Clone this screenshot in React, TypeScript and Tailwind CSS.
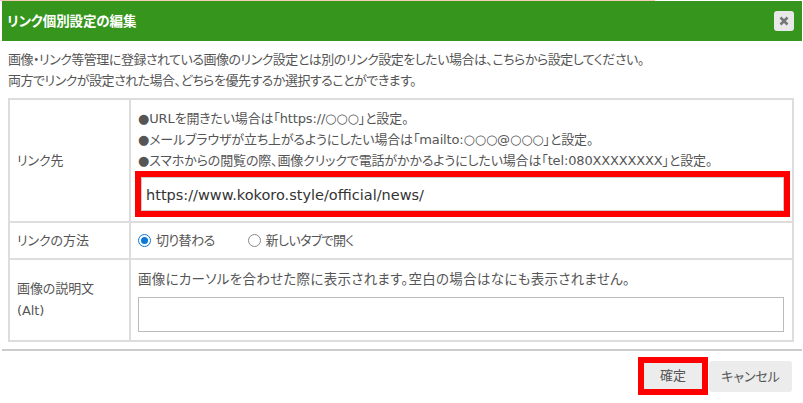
const font = "font-['DejaVu_Sans','Noto_Sans_CJK_JP',sans-serif]";

function Radio({ checked, label }: { checked?: boolean; label: string }) {
  return (
    <label className="flex items-center gap-[5px]">
      <span
        className={
          checked
            ? "flex h-[13px] w-[13px] items-center justify-center rounded-full border border-[#0a78d7] bg-white"
            : "flex h-[13px] w-[13px] items-center justify-center rounded-full border border-[#8a8a8a] bg-white"
        }
      >
        {checked && <span className="h-[7px] w-[7px] rounded-full bg-[#0a78d7]" />}
      </span>
      <span>{label}</span>
    </label>
  );
}

export default function App() {
  return (
    <div className={`${font} flex h-[403px] w-[803px] flex-col overflow-hidden bg-white text-[13px] text-[#555] [font-feature-settings:'palt'] tracking-[-0.1px]`}>
      <div className="h-[1px] w-[655px] shrink-0 bg-[#f6cdb4]" />
      <div className="ml-[2px] flex h-[40px] w-[800px] shrink-0 items-center justify-between bg-[#35951c] pl-[5px] pr-[8px]">
        <h1 className="text-[13.5px] font-bold text-white">リンク個別設定の編集</h1>
        <button className="flex h-[20px] w-[20px] items-center justify-center rounded-[3px] bg-[#e8e8e8] text-[#777]">
          <svg width="10" height="10" viewBox="0 0 10 10">
            <path d="M1.5 1.5 8.5 8.5M8.5 1.5 1.5 8.5" stroke="#777" strokeWidth="2.6" />
          </svg>
        </button>
      </div>

      <div className="px-[8px] pt-[8px] leading-[21px] tracking-[-0.5px]">
        <p>画像・リンク等管理に登録されている画像のリンク設定とは別のリンク設定をしたい場合は、こちらから設定してください。</p>
        <p>両方でリンクが設定された場合、どちらを優先するか選択することができます。</p>
      </div>

      <div className="mx-[8px] mt-[7px] flex w-[786px] flex-col border-2 border-[#ddd]">
        <div className="flex h-[123px] border-b-2 border-[#ddd]">
          <div className="flex w-[121px] shrink-0 items-center border-r-2 border-[#ddd] pl-[7px]">リンク先</div>
          <div className="flex-1 pl-[4px] pt-[8px]">
            <ul className="pl-[3px] leading-[21px] tracking-[-0.15px]">
              <li>●URLを開きたい場合は「https://○○○」と設定。</li>
              <li>●メールブラウザが立ち上がるようにしたい場合は「mailto:○○○@○○○」と設定。</li>
              <li>●スマホからの閲覧の際、画像クリックで電話がかかるようにしたい場合は「tel:080XXXXXXXX」と設定。</li>
            </ul>
            <div className="h-[46px] w-[655px] border-[6px] border-[#ff0000]">
              <div className="flex h-full items-center border border-[#ccc] pl-[4px] pt-[3px] text-[14.5px] tracking-normal text-[#333]">
                https://www.kokoro.style/official/news/
              </div>
            </div>
          </div>
        </div>
        <div className="flex h-[37px] border-b-2 border-[#ddd]">
          <div className="flex w-[121px] shrink-0 items-center border-r-2 border-[#ddd] pl-[7px]">リンクの方法</div>
          <div className="flex flex-1 items-center gap-[33px] pl-[7px] tracking-[-0.6px]">
            <Radio checked label="切り替わる" />
            <Radio label="新しいタブで開く" />
          </div>
        </div>
        <div className="flex h-[80px]">
          <div className="flex w-[121px] shrink-0 flex-col justify-center border-r-2 border-[#ddd] pl-[7px] leading-[22px]">
            <span>画像の説明文</span>
            <span>(Alt)</span>
          </div>
          <div className="flex-1 pl-[7px] pr-[8px] pt-[9px]">
            <p className="text-[13.5px] leading-[20px] tracking-[0.3px]">画像にカーソルを合わせた際に表示されます。空白の場合はなにも表示されません。</p>
            <div className="mt-[8px] h-[35px] border border-[#bbb] bg-white" />
          </div>
        </div>
      </div>

      <div className="ml-[2px] mt-[7px] flex h-[46px] w-[800px] items-start justify-end border-t-2 border-[#ccc] pr-[10px] pt-[6px]">
        <div className="flex h-[38px] w-[70px] items-center justify-center border-[6px] border-[#ff0000]">
          <button className="flex h-full w-full items-center justify-center bg-[#ececec] text-[#555]">確定</button>
        </div>
        <button className="ml-[1px] mt-[4px] flex h-[31px] w-[83px] items-center justify-center rounded-[3px] bg-[#ececec] text-[#555]">キャンセル</button>
      </div>
    </div>
  );
}
